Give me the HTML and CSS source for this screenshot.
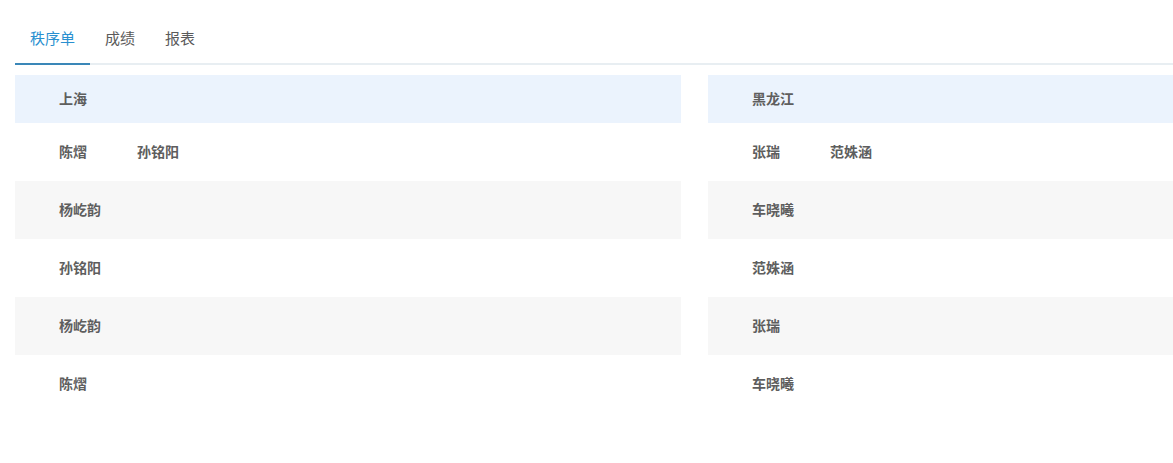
FILE: index.html
```html
<!DOCTYPE html>
<html lang="zh">
<head>
<meta charset="utf-8">
<link rel="stylesheet" href="styles.css">
</head>
<body>
<div class="page">
  <div class="tabs">
    <div class="tab active">秩序单</div>
    <div class="tab">成绩</div>
    <div class="tab">报表</div>
  </div>
  <div class="columns">
    <div class="col">
      <div class="row head"><span class="name">上海</span></div>
      <div class="row"><span class="name">陈熠</span><span class="name">孙铭阳</span></div>
      <div class="row alt"><span class="name">杨屹韵</span></div>
      <div class="row"><span class="name">孙铭阳</span></div>
      <div class="row alt"><span class="name">杨屹韵</span></div>
      <div class="row"><span class="name">陈熠</span></div>
    </div>
    <div class="col">
      <div class="row head"><span class="name">黑龙江</span></div>
      <div class="row"><span class="name">张瑞</span><span class="name">范姝涵</span></div>
      <div class="row alt"><span class="name">车晓曦</span></div>
      <div class="row"><span class="name">范姝涵</span></div>
      <div class="row alt"><span class="name">张瑞</span></div>
      <div class="row"><span class="name">车晓曦</span></div>
    </div>
  </div>
</div>
</body>
</html>
```
FILE: styles.css
```css
html, body {
  margin: 0;
  padding: 0;
  background: #ffffff;
  overflow: hidden;
}
body {
  font-family: "Noto Sans CJK SC", "Liberation Sans", sans-serif;
  color: #555;
}
.page {
  padding: 20px 0 0 15px;
}
.tabs {
  display: flex;
  border-bottom: 2px solid #e8eef2;
  height: 43px;
}
.tab {
  font-size: 15px;
  line-height: 35px;
  padding: 0 15px;
  color: #5a5a5a;
  height: 43px;
  box-sizing: border-box;
}
.tab.active {
  color: #2a90d0;
  border-bottom: 2px solid #3a87b8;
  height: 45px;
}
.columns {
  display: grid;
  grid-template-columns: 666px 1fr;
  column-gap: 27px;
  margin-top: 10px;
}
.row {
  height: 58px;
  display: flex;
  align-items: center;
  padding-left: 44px;
}
.row.head {
  height: 48px;
  background: #ebf3fd;
}
.row.alt {
  background: #f7f7f7;
}
.name {
  font-size: 14px;
  line-height: 20px;
  margin-top: -2px;
  font-weight: bold;
  color: #5e5e5e;
  min-width: 78px;
}
```
